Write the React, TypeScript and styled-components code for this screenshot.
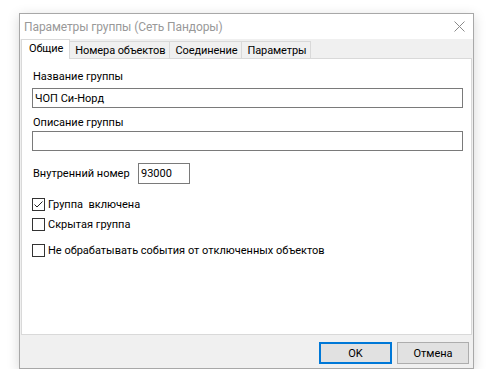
import React from "react";
import styled, { createGlobalStyle } from "styled-components";

const GlobalStyle = createGlobalStyle`
  html, body {
    margin: 0;
    padding: 0;
    background: #ffffff;
  }
  body {
    font-family: Roboto, "Noto Sans", sans-serif;
    font-size: 11px;
    color: #000;
  }
`;

// Styles
const Page = styled.div`
  padding: 13px 0 0 19px;
`;

const Window = styled.div`
  width: 453px;
  height: 354px;
  border: 1px solid #a8a8a8;
  background: #f0f0f0;
  box-shadow: 0 3px 12px rgba(0, 0, 0, 0.16);
  display: flex;
  flex-direction: column;
`;

const TitleBar = styled.div`
  height: 25px;
  background: #ffffff;
  display: flex;
  align-items: center;
  justify-content: space-between;
  padding: 0 8px 0 4px;
`;

const Title = styled.span`
  color: #999999;
  font-size: 12px;
  letter-spacing: -0.1px;
`;

const Body = styled.div`
  flex: 1;
  display: flex;
  flex-direction: column;
  padding: 0 1px;
`;

const TabStrip = styled.div`
  position: relative;
  z-index: 1;
  height: 20px;
  margin-bottom: -1px;
  display: flex;
  align-items: flex-end;
`;

const Tab = styled.div<{ $active?: boolean }>`
  box-sizing: border-box;
  height: ${(p) => (p.$active ? "20px" : "17px")};
  margin-bottom: ${(p) => (p.$active ? "0" : "1px")};
  margin-left: ${(p) => (p.$active ? "0" : "-1px")};
  padding: ${(p) => (p.$active ? "0 6px 2px 7px" : "0 4px 0 5px")};
  border: 1px solid #d9d9d9;
  border-bottom: none;
  background: ${(p) => (p.$active ? "#ffffff" : "#f0f0f0")};
  display: flex;
  align-items: center;
  white-space: nowrap;
  line-height: 15px;
  letter-spacing: -0.1px;
`;

const Panel = styled.div`
  height: 277px;
  box-sizing: border-box;
  background: #ffffff;
  border: 1px solid #d9d9d9;
  padding: 10px 8px 0 10px;
  display: flex;
  flex-direction: column;
`;

const Label = styled.div<{ $top?: number; $bottom?: number; $width?: number }>`
  line-height: 15px;
  margin-top: ${(p) => p.$top ?? 0}px;
  margin-bottom: ${(p) => p.$bottom ?? 0}px;
  padding-left: 1px;
  white-space: nowrap;
  flex-shrink: 0;
  width: ${(p) => (p.$width ? `${p.$width}px` : "auto")};
`;

const TextBox = styled.div<{ $width?: number; $height?: number }>`
  box-sizing: border-box;
  height: ${(p) => p.$height ?? 20}px;
  width: ${(p) => (p.$width ? `${p.$width}px` : "100%")};
  flex-shrink: 0;
  border: 1px solid #7a7a7a;
  background: #ffffff;
  padding: 0 2px;
  display: flex;
  align-items: center;
  line-height: 15px;
`;

const InlineRow = styled.div`
  display: flex;
  align-items: center;
  margin-top: 12px;
`;

const CheckRow = styled.label<{ $top: number }>`
  display: flex;
  align-items: center;
  gap: 3px;
  margin-top: ${(p) => p.$top}px;
  line-height: 15px;
  white-space: pre;
`;

const Box = styled.span`
  box-sizing: border-box;
  width: 13px;
  height: 13px;
  border: 1px solid #333333;
  background: #ffffff;
  display: flex;
  align-items: center;
  justify-content: center;
`;

const Footer = styled.div`
  flex: 1;
  display: flex;
  justify-content: flex-end;
  align-items: flex-start;
  gap: 5px;
  padding: 7px 3px 0 0;
`;

const Button = styled.div<{ $default?: boolean }>`
  box-sizing: border-box;
  width: ${(p) => (p.$default ? "73px" : "72px")};
  height: 22px;
  background: #e1e1e1;
  border: ${(p) => (p.$default ? "2px solid #0078d7" : "1px solid #adadad")};
  display: flex;
  align-items: center;
  justify-content: center;
`;

const Check = ({ checked }: { checked?: boolean }) => (
  <Box>
    {checked && (
      <svg width="11" height="11" viewBox="0 0 11 11">
        <path d="M1.5 5.5 L4 8 L9.5 2.5" fill="none" stroke="#222" strokeWidth="1" />
      </svg>
    )}
  </Box>
);

const CloseIcon = () => (
  <svg width="11" height="11" viewBox="0 0 11 11">
    <path d="M0.5 0.5 L10.5 10.5 M10.5 0.5 L0.5 10.5" stroke="#8a8a8a" strokeWidth="1" />
  </svg>
);

export default function App() {
  return (
    <Page>
      <GlobalStyle />
      <Window>
        <TitleBar>
          <Title>Параметры группы (Сеть Пандоры)</Title>
          <CloseIcon />
        </TitleBar>
        <Body>
          <TabStrip>
            <Tab $active>Общие</Tab>
            <Tab>Номера объектов</Tab>
            <Tab>Соединение</Tab>
            <Tab>Параметры</Tab>
          </TabStrip>
          <Panel>
            <Label $bottom={4}>Название группы</Label>
            <TextBox>ЧОП Си-Норд</TextBox>
            <Label $top={7} $bottom={1}>Описание группы</Label>
            <TextBox />
            <InlineRow>
              <Label $width={105}>Внутренний номер</Label>
              <TextBox $width={52} $height={21}>93000</TextBox>
            </InlineRow>
            <CheckRow $top={13}>
              <Check checked />
              Группа  включена
            </CheckRow>
            <CheckRow $top={5}>
              <Check />
              Скрытая группа
            </CheckRow>
            <CheckRow $top={11}>
              <Check />
              Не обрабатывать события от отключенных объектов
            </CheckRow>
          </Panel>
          <Footer>
            <Button $default>OK</Button>
            <Button>Отмена</Button>
          </Footer>
        </Body>
      </Window>
    </Page>
  );
}
